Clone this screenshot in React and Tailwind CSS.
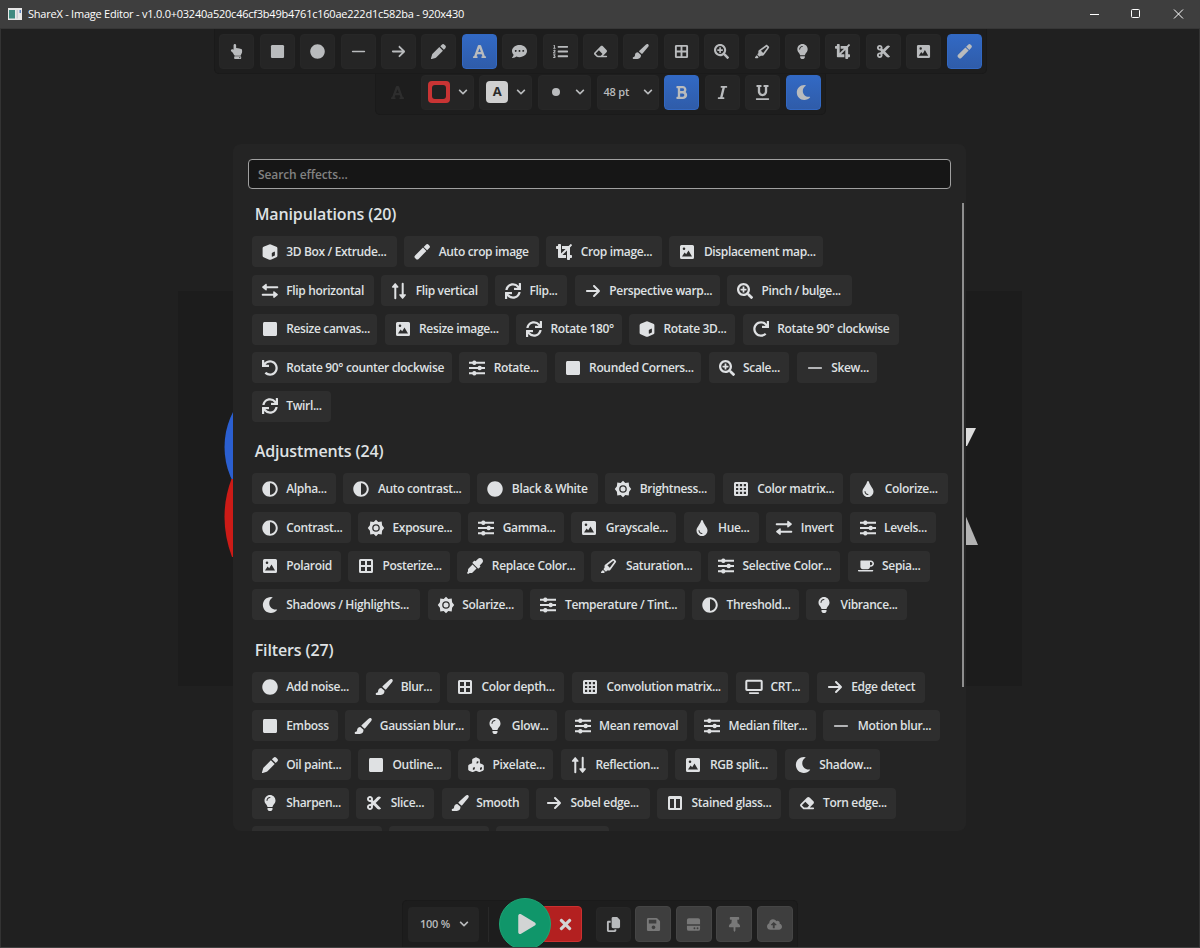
import {
  FaAdjust,
  FaBold,
  FaChevronDown,
  FaCircle,
  FaCloudUploadAlt,
  FaCoffee,
  FaCommentDots,
  FaCrop,
  FaCut,
  FaEyeDropper,
  FaFont,
  FaHandPointUp,
  FaItalic,
  FaLightbulb,
  FaListOl,
  FaMoon,
  FaPlay,
  FaRedo,
  FaSave,
  FaSearchPlus,
  FaSquare,
  FaSync,
  FaThumbtack,
  FaTimes,
  FaTint,
  FaUnderline,
  FaUndo,
} from 'react-icons/fa'
import { FaArrowRight, FaCopy, FaEraser, FaHighlighter } from 'react-icons/fa6'

// Icons the pack lacks, on a 16px grid
const glyph = (d) =>
  function Glyph({ className }) {
    return (
      <svg viewBox="0 0 16 16" width="16" height="16" fill="currentColor" fillRule="evenodd" overflow="visible" className={className}>
        <path d={d} />
      </svg>
    )
  }

const Picture = glyph(
  'M2.500 1h11A1.500 1.500 0 0 1 15 2.500v11a1.500 1.500 0 0 1-1.500 1.500h-11A1.500 1.500 0 0 1 1 13.500v-11A1.500 1.500 0 0 1 2.500 1zM5 3.500a1.300 1.300 0 1 0 0 2.600 1.300 1.300 0 0 0 0-2.600zM3 12.500h10L9.500 6.500 7.200 10.300 5.600 8.500z',
)
const Windows = glyph(
  'M2.500 1h11A1.500 1.500 0 0 1 15 2.500v11a1.500 1.500 0 0 1-1.500 1.500h-11A1.500 1.500 0 0 1 1 13.500v-11A1.500 1.500 0 0 1 2.500 1zM3 3v4h4V3zM9 3v4h4V3zM3 9v4h4V9zM9 9v4h4V9z',
)
const Matrix = glyph(
  'M2.500 1h11A1.500 1.500 0 0 1 15 2.500v11a1.500 1.500 0 0 1-1.500 1.500h-11A1.500 1.500 0 0 1 1 13.500v-11A1.500 1.500 0 0 1 2.500 1zM3 3v2.200h2.200V3zM6.900 3v2.200h2.200V3zM10.800 3v2.200H13V3zM3 6.900v2.200h2.200V6.900zM6.900 6.900v2.200h2.200V6.900zM10.800 6.900v2.200H13V6.900zM3 10.800V13h2.200v-2.200zM6.900 10.800V13h2.200v-2.200zM10.800 10.800V13H13v-2.200z',
)
const Columns = glyph(
  'M2.500 1h11A1.500 1.500 0 0 1 15 2.500v11a1.500 1.500 0 0 1-1.500 1.500h-11A1.500 1.500 0 0 1 1 13.500v-11A1.500 1.500 0 0 1 2.500 1zM3 4v9h4V4zM9 4v9h4V4z',
)
const Sliders = glyph(
  'M0 1.700h3.300a2.200 2.200 0 0 1 4 0H16v2H7.300a2.200 2.200 0 0 1-4 0H0zM0 7h8.700a2.200 2.200 0 0 1 4 0H16v2h-3.300a2.200 2.200 0 0 1-4 0H0zM0 12.300h3.300a2.200 2.200 0 0 1 4 0H16v2H7.300a2.200 2.200 0 0 1-4 0H0z',
)
const Cube = glyph(
  'M7.200.4a2 2 0 0 1 1.600 0l5.500 2.300A1.700 1.700 0 0 1 15.400 4.300v7.400a1.700 1.700 0 0 1-1 1.600l-5.600 2.400a2 2 0 0 1-1.600 0L1.600 13.300a1.700 1.700 0 0 1-1-1.600V4.300a1.700 1.700 0 0 1 1-1.600zM9.800 9.300a.8.800 0 0 1 .4-.6l1.900-1a.5.500 0 0 1 .8.500v2.700a.9.900 0 0 1-.5.800l-1.800.9a.5.500 0 0 1-.8-.5z',
)
const Cubes = glyph(
  'M8 .3l3.300 1.500.6.9v3.500l3 1.300.9 1v4.200l-.8 1-3.200 1.400h-.8L8 13.700l-3 1.400h-.8L1 13.700l-.8-1V8.500l.9-1 3-1.300V2.700l.6-.9zM8.600 4.700v2l1.700-.8V3.900zM4.900 10.800v2.300l1.900-.9V9.900zM12 10.800v2.300l1.900-.9V9.900z',
)
const Wand = glyph(
  'M11.900.7a1.900 1.900 0 0 1 2.700 0l.7.700a1.900 1.900 0 0 1 0 2.700l-2.200 2.200-3.400-3.400zM9 3.600L12.400 7l-7.800 7.900a1.900 1.900 0 0 1-2.700 0l-.8-.8a1.900 1.900 0 0 1 0-2.700z',
)
const Pencil = glyph(
  'M8.900 3.300l3.800 3.800-7.200 7.200a2 2 0 0 1-.8.500L.8 16a.6.600 0 0 1-.8-.8l1.200-3.900a2 2 0 0 1 .5-.8zM9.900 2.300L11.500.7a2 2 0 0 1 2.800 0l1 1a2 2 0 0 1 0 2.800l-1.600 1.600z',
)
const Brush = glyph(
  'M16.300.4C15.500-.2 14.300.200 13.300 1L6.800 7.100c-.5.500-.4.900 0 1.200L9 10.300c.4.300.8.300 1.200-.1L16 3.300c.8-1.100 1.100-2.200.3-2.900zM5.300 8.900c-2 0-3.200 1.400-3.200 3.100 0 1.400-.7 1.700-2.100 2-.4.600-.4 1.900.5 1.900h4.300c2.500-.1 3.900-2 3.700-4.200z',
)
const Sun = glyph(
  'M8-.2L10.300 1.900 13.700 1.600 14.100 5.300 16.200 8 14.100 10.700 13.700 14.400 10.300 14.100 8 16.200 5.700 14.100 2.300 14.400 1.900 10.700-.2 8 1.900 5.300 2.300 1.600 5.700 1.900zM8 4.200a3.800 3.800 0 1 0 0 7.600 3.800 3.800 0 0 0 0-7.600zM8 5.500a2.500 2.500 0 1 1 0 5 2.500 2.500 0 0 1 0-5z',
)
const Swap = glyph(
  'M.7 3.300h10.500V1.700c0-.8.600-1.100 1.200-.6l3.200 2.500a.8.800 0 0 1 0 1.200l-3.200 2.500c-.6.500-1.200.2-1.200-.6V5.300H.7a1 1 0 0 1 0-2zM15.300 10.700H4.800V9.100c0-.8-.6-1.100-1.200-.6L.4 11a.8.800 0 0 0 0 1.200l3.200 2.500c.6.500 1.200.2 1.200-.6v-1.400h10.500a1 1 0 0 0 0-2z',
)
const Screen = glyph(
  'M1 .7h14A1.700 1.700 0 0 1 16.700 2.400v7.800A1.700 1.700 0 0 1 15 11.900H1A1.700 1.700 0 0 1-.7 10.200V2.400A1.700 1.700 0 0 1 1 .7zM1.300 2.700v7.200h13.400V2.700zM3.800 13.200h8.400a.9.900 0 0 1 0 1.800H3.800a.9.900 0 0 1 0-1.800z',
)
const Drive = glyph(
  'M3 1.300h10a2 2 0 0 1 2 2v4.500H1V3.300a2 2 0 0 1 2-2zM1 9.200h14v3.500a2 2 0 0 1-2 2H3a2 2 0 0 1-2-2zM9 11a1 1 0 1 0 0 2 1 1 0 0 0 0-2zM12.300 11a1 1 0 1 0 0 2 1 1 0 0 0 0-2z',
)
const Line = glyph('M1.700 7.200h12.600a.8.800 0 0 1 0 1.600H1.700a.8.800 0 0 1 0-1.600z')

const FlipH = () => <Swap className="-scale-x-100" />
const FlipV = () => <Swap className="-rotate-90" />

// [icon, label, width]
const sections = [
  {
    title: 'Manipulations (20)',
    effects: [
      [Cube, '3D Box / Extrude...', 'w-[145px]'],
      [Wand, 'Auto crop image', 'w-[134.7px]'],
      [FaCrop, 'Crop image...', 'w-[115.7px]'],
      [Picture, 'Displacement map...', 'w-[154px]'],
      [FlipH, 'Flip horizontal', 'w-[122px]'],
      [FlipV, 'Flip vertical', 'w-[106.4px]'],
      [FaSync, 'Flip...', 'w-[72.4px]'],
      [FaArrowRight, 'Perspective warp...', 'w-[144.8px]'],
      [FaSearchPlus, 'Pinch / bulge...', 'w-[124.8px]'],
      [FaSquare, 'Resize canvas...', 'w-[125.4px]'],
      [Picture, 'Resize image...', 'w-[124px]'],
      [FaSync, 'Rotate 180°', 'w-[105.6px]'],
      [Cube, 'Rotate 3D...', 'w-[106.3px]'],
      [FaRedo, 'Rotate 90° clockwise', 'w-[156px]'],
      [FaUndo, 'Rotate 90° counter clockwise', 'w-[200px]'],
      [Sliders, 'Rotate...', 'w-[88px]'],
      [FaSquare, 'Rounded Corners...', 'w-[146.6px]'],
      [FaSearchPlus, 'Scale...', 'w-[80.7px]'],
      [Line, 'Skew...', 'w-[80.7px]'],
      [FaSync, 'Twirl...', 'w-[79px]'],
    ],
  },
  {
    title: 'Adjustments (24)',
    effects: [
      [FaAdjust, 'Alpha...', 'w-[84.3px]'],
      [FaAdjust, 'Auto contrast...', 'w-[126.5px]'],
      [FaCircle, 'Black & White', 'w-[120.5px]'],
      [Sun, 'Brightness...', 'w-[110.1px]'],
      [Matrix, 'Color matrix...', 'w-[120.1px]'],
      [FaTint, 'Colorize...', 'w-[97.2px]'],
      [FaAdjust, 'Contrast...', 'w-[98.9px]'],
      [Sun, 'Exposure...', 'w-[102.8px]'],
      [Sliders, 'Gamma...', 'w-[95.6px]'],
      [Picture, 'Grayscale...', 'w-[104.8px]'],
      [FaTint, 'Hue...', 'w-[75.4px]'],
      [Swap, 'Invert', 'w-[75.8px]'],
      [Sliders, 'Levels...', 'w-[86.6px]'],
      [Picture, 'Polaroid', 'w-[88.9px]'],
      [Windows, 'Posterize...', 'w-[101.9px]'],
      [FaEyeDropper, 'Replace Color...', 'w-[126.6px]'],
      [FaHighlighter, 'Saturation...', 'w-[109.3px]'],
      [Sliders, 'Selective Color...', 'w-[132px]'],
      [FaCoffee, 'Sepia...', 'w-[82.7px]'],
      [FaMoon, 'Shadows / Highlights...', 'w-[168.7px]'],
      [Sun, 'Solarize...', 'w-[95.2px]'],
      [Sliders, 'Temperature / Tint...', 'w-[154.2px]'],
      [FaAdjust, 'Threshold...', 'w-[106.5px]'],
      [FaLightbulb, 'Vibrance...', 'w-[101px]'],
    ],
  },
  {
    title: 'Filters (27)',
    effects: [
      [FaCircle, 'Add noise...', 'w-[107px]'],
      [Brush, 'Blur...', 'w-[73.4px]'],
      [Windows, 'Color depth...', 'w-[117.5px]'],
      [Matrix, 'Convolution matrix...', 'w-[156.6px]'],
      [Screen, 'CRT...', 'w-[73.4px]'],
      [FaArrowRight, 'Edge detect', 'w-[108.5px]'],
      [FaSquare, 'Emboss', 'w-[86.2px]'],
      [Brush, 'Gaussian blur...', 'w-[124.6px]'],
      [FaLightbulb, 'Glow...', 'w-[79.8px]'],
      [Sliders, 'Mean removal', 'w-[122px]'],
      [Sliders, 'Median filter...', 'w-[121.9px]'],
      [Line, 'Motion blur...', 'w-[116.5px]'],
      [Pencil, 'Oil paint...', 'w-[98.9px]'],
      [FaSquare, 'Outline...', 'w-[92.6px]'],
      [Cubes, 'Pixelate...', 'w-[95.4px]'],
      [FlipV, 'Reflection...', 'w-[107.1px]'],
      [Picture, 'RGB split...', 'w-[101.9px]'],
      [FaMoon, 'Shadow...', 'w-[95.7px]'],
      [FaLightbulb, 'Sharpen...', 'w-[97.2px]'],
      [FaCut, 'Slice...', 'w-[77.9px]'],
      [Brush, 'Smooth', 'w-[87px]'],
      [FaArrowRight, 'Sobel edge...', 'w-[113.6px]'],
      [Columns, 'Stained glass...', 'w-[124px]'],
      [FaEraser, 'Torn edge...', 'w-[107px]'],
      [null, '', 'w-[130px]'],
      [null, '', 'w-[99.4px]'],
      [null, '', 'w-[113px]'],
    ],
  },
]

const tools = [
  FaHandPointUp,
  FaSquare,
  FaCircle,
  Line,
  FaArrowRight,
  Pencil,
  FaFont,
  FaCommentDots,
  FaListOl,
  FaEraser,
  Brush,
  Windows,
  FaSearchPlus,
  FaHighlighter,
  FaLightbulb,
  FaCrop,
  FaCut,
  Picture,
  Wand,
]

function ToolButton({ icon: Icon, active }) {
  return (
    <button
      type="button"
      className={`flex h-[35px] w-[35px] shrink-0 items-center justify-center rounded-[4px] border text-[15px] text-[#b9bbbd] [&_svg]:h-[15px] [&_svg]:w-auto [&_svg]:shrink-0 ${
        active ? 'border-[#3268c2] bg-gradient-to-b from-[#3269c4] to-[#2f5ca9]' : 'border-[#272727] bg-[#252525]'
      }`}
    >
      <Icon />
    </button>
  )
}

function Picker({ children, wide }) {
  return (
    <button
      type="button"
      className={`flex h-[35px] shrink-0 items-center justify-between rounded-[4px] border border-[#272727] bg-[#252525] pr-[5px] pl-[6px] ${
        wide ? 'w-[62px]' : 'w-[53px]'
      }`}
    >
      {children}
      <FaChevronDown className="text-[10px] text-[#b9bbbd]" />
    </button>
  )
}

function TitleBar() {
  return (
    <header className="flex h-[29px] items-center border-b border-[#363636] bg-[#3e3e3e] pl-2">
      <svg width="14" height="12" viewBox="0 0 14 12">
        <rect width="14" height="12" fill="#e8e8e8" />
        <rect x="1" y="2" width="6" height="8.500" fill="#3f8a80" />
        <rect x="8.500" y="2" width="1.500" height="8.500" fill="#c9ccd2" />
        <rect x="11.500" y="2" width="1.500" height="3" fill="#5c84c4" />
      </svg>
      <span className="ml-[6px] whitespace-nowrap text-[11px] tracking-[-0.23px] text-white">
        ShareX - Image Editor - v1.0.0+03240a520c46cf3b49b4761c160ae222d1c582ba - 920x430
      </span>
      <svg className="mr-[16px] ml-auto" width="94" height="10" viewBox="0 0 94 10" fill="none" stroke="#fff">
        <path d="M0 5.500h9" />
        <rect x="41.500" y="0.500" width="8" height="8" rx="1" />
        <path d="M84 .5l9 9M93 .5l-9 9" />
      </svg>
    </header>
  )
}

function EffectsPanel() {
  return (
    <section className="relative mt-[29px] -ml-px h-[687px] w-[733px] shrink-0 overflow-hidden rounded-[8px] bg-[#242424] pt-[15px]">
      <input
        placeholder="Search effects..."
        className="mx-auto block h-[30px] w-[703px] rounded-[4px] border border-[#a0a0a0] bg-[#161616] px-[9px] text-[12px] font-semibold tracking-[-0.1px] text-white placeholder:text-[#828282]"
      />
      <div className="mt-[14.200px] flex flex-col gap-[18.300px] pl-[18.700px]">
        {sections.map((section) => (
          <div key={section.title}>
            <h2 className="mb-[11.300px] h-[22px] pl-[3px] text-[16px] leading-[22px] font-semibold tracking-[-0.12px] text-[#dfe1e3]">
              {section.title}
            </h2>
            <div className="flex w-[698px] flex-wrap gap-[7.450px] gap-y-[7.600px]">
              {section.effects.map(([Icon, label, width], i) => (
                <button
                  key={i}
                  type="button"
                  className={`flex h-[31px] shrink-0 items-center rounded-[4px] bg-[#2e2e2e] pl-[10px] text-[#dfe1e3] ${width}`}
                >
                  <span className="flex w-4 shrink-0 justify-center text-[16px] [&_svg]:h-[16px] [&_svg]:w-auto [&_svg]:shrink-0">
                    {Icon && <Icon />}
                  </span>
                  <span className="ml-[8.500px] text-[12px] font-semibold whitespace-nowrap tracking-[-0.34px]">{label}</span>
                </button>
              ))}
            </div>
          </div>
        ))}
      </div>
      <div className="absolute top-[59px] right-[2px] h-[484px] w-[2px] bg-[#8e8e8e]" />
    </section>
  )
}

function OutputButton({ icon: Icon }) {
  return (
    <button
      type="button"
      className="flex h-[36px] w-[36px] shrink-0 items-center justify-center rounded-[4px] border border-[#454545] bg-[#3e3e3e] text-[15px] text-[#787878] [&_svg]:h-[15px] [&_svg]:w-auto"
    >
      <Icon />
    </button>
  )
}

function BottomBar() {
  return (
    <footer className="mt-auto flex h-[47px] w-[396px] items-center rounded-t-[5px] border border-b-0 border-[#1a1a1a] bg-[#1d1d1d] pl-[5px]">
      <button type="button" className="flex h-[35px] w-[71px] items-center justify-between rounded-[4px] bg-[#252525] pr-[10px] pl-[12px]">
        <span className="text-[11px] font-semibold tracking-[-0.25px] text-[#b9bbbd]">100 %</span>
        <FaChevronDown className="text-[10px] text-[#b9bbbd]" />
      </button>
      <div className="ml-[9px] h-[35px] w-px bg-[#282828]" />
      <div className="ml-[10px] flex items-center">
        <button
          type="button"
          className="z-10 -mr-[7px] flex h-[52px] w-[52px] shrink-0 items-center justify-center rounded-full border border-[#1da474] bg-[#10966a] pl-[4px] text-[20px] text-[#d2d4d4]"
        >
          <FaPlay />
        </button>
        <button
          type="button"
          className="flex h-[36px] w-[38px] items-center justify-center rounded-r-[4px] border border-[#cb3030] bg-[#b32020] pl-[5px] text-[17px] text-[#d2d4d4]"
        >
          <FaTimes />
        </button>
      </div>
      <div className="ml-[14px] flex items-center gap-[4.400px]">
        <ToolButton icon={FaCopy} />
        <OutputButton icon={FaSave} />
        <OutputButton icon={Drive} />
        <OutputButton icon={FaThumbtack} />
        <OutputButton icon={FaCloudUploadAlt} />
      </div>
    </footer>
  )
}

export default function App() {
  return (
    <div className="flex h-[948px] w-[1200px] flex-col overflow-hidden border-b border-[#414141] bg-[#202020] font-['Open_Sans','Noto_Sans',sans-serif]">
      <TitleBar />
      <main className="relative flex flex-1 flex-col items-center border-x border-[#333333]">
        {/* Image being edited, dimmed behind the panel */}
        <svg className="absolute top-[262px] left-[177px]" width="844" height="395" viewBox="178 291 844 395">
          <rect x="178" y="291" width="844" height="395" fill="#1c1c1c" />
          <circle cx="301" cy="447" r="76.500" fill="#2b5fd0" />
          <path d="M231.500 479Q224.500 497 224.500 517T232 557H260V479z" fill="#cc1b17" />
          <path d="M960 428H976L967 446H960z" fill="#dcdcdc" />
          <path d="M960 503L967 519L978 545H960z" fill="#b3b3b3" />
        </svg>

        <div className="relative ml-px flex h-[45px] items-center gap-[5.400px] rounded-b-[5px] border border-t-0 border-[#1a1a1a] bg-[#1d1d1d] px-[4.500px]">
          {tools.map((Icon, i) => (
            <ToolButton key={i} icon={Icon} active={Icon === FaFont || Icon === Wand} />
          ))}
        </div>

        <div className="relative ml-px flex h-[41px] items-start gap-[5.600px] rounded-b-[5px] border border-t-0 border-[#1a1a1a] bg-[#1d1d1d] px-[4px] pt-[0.500px]">
          <div className="flex h-[35px] w-[35px] items-center justify-center text-[15px] text-[#2d2d2d]">
            <FaFont />
          </div>
          <Picker>
            <span className="flex h-[22px] w-[22px] items-center justify-center rounded-[4px] bg-[#c93434]">
              <span className="h-[14px] w-[14px] rounded-[3px] bg-[#222222]" />
            </span>
          </Picker>
          <Picker>
            <span className="flex h-[22px] w-[22px] items-center justify-center rounded-[4px] bg-[#cfcfcf] text-[13px] font-bold text-[#2a2a2a]">
              A
            </span>
          </Picker>
          <Picker>
            <span className="ml-[7px] h-[8px] w-[8px] rounded-full bg-[#b9bbbd]" />
          </Picker>
          <Picker wide>
            <span className="text-[11px] font-semibold tracking-[-0.2px] text-[#b9bbbd]">48 pt</span>
          </Picker>
          <ToolButton icon={FaBold} active />
          <ToolButton icon={FaItalic} />
          <ToolButton icon={FaUnderline} />
          <ToolButton icon={FaMoon} active />
        </div>

        <EffectsPanel />
        <BottomBar />
      </main>
    </div>
  )
}
